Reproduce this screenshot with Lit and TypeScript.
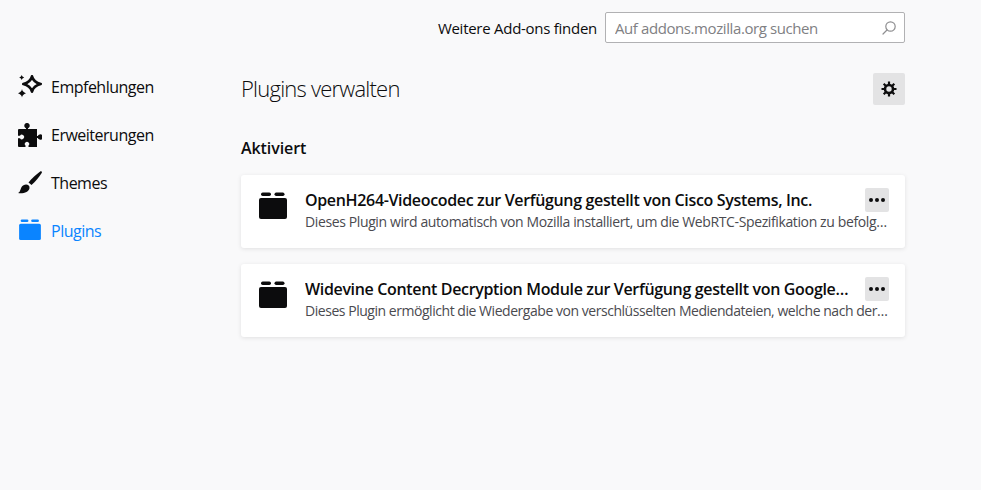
import { LitElement, html, css, svg } from "lit";
import { customElement } from "lit/decorators.js";

const pluginIcon = (cls: string) => html`<svg class=${cls} viewBox="0 0 28 27" fill="currentColor">
  <rect x="2" y="0.5" width="10" height="3.5" rx="1.7"></rect>
  <rect x="15.5" y="0.5" width="10" height="3.5" rx="1.7"></rect>
  <rect x="0" y="6" width="28" height="21" rx="2"></rect>
</svg>`;

const navIcons = {
  sparkle: svg`
    <path d="M14 1.3Q15.6 7.4 22.7 9Q15.6 10.6 14 16.7Q12.4 10.6 5.3 9Q12.4 7.4 14 1.3Z" fill="none" stroke="currentColor" stroke-width="2.6" stroke-linejoin="round"></path>
    <path d="M3.7 0Q4 1.9 6.2 2.5Q4 3.1 3.7 5Q3.4 3.1 1.2 2.5Q3.4 1.9 3.7 0Z" fill="currentColor"></path>
    <path d="M4 14Q4.4 17 8 18.3Q4.4 19.5 4 22.5Q3.6 19.5 0 18.3Q3.6 17 4 14Z" fill="currentColor"></path>`,
  puzzle: svg`
    <path d="M1 6H8V5.2A2.7 2.7 0 1 1 10 5.2V6H19V13H19.8A2.7 2.7 0 1 1 19.8 15H19V24H10.5V22.6A2.2 2.2 0 1 0 7.5 22.6V24H1A1 1 0 0 1 0 23V15.2H2A2.2 2.2 0 1 0 2 12.8H0V7A1 1 0 0 1 1 6Z" fill="currentColor"></path>`,
  brush: svg`
    <path d="M22.5 0.3C23.6 -0.1 24.3 1 23.7 2C21 6.5 17 11 13.5 14L10.5 11.5C13.5 8 18.5 3 22.5 0.3Z" fill="currentColor"></path>
    <path d="M0 22C3 21 2 16 5.5 14.2C8.5 12.7 12 14 11.5 17.2C11 21 5 23 0 22Z" fill="currentColor"></path>`,
};

@customElement("app-root")
export class AppRoot extends LitElement {
  static styles = css`
    :host {
      display: block;
      height: 490px;
      background: #f9f9fa;
      color: #0c0c0d;
      font-family: "Open Sans", "Noto Sans", sans-serif;
      font-size: 15px;
      overflow: hidden;
    }
    .page {
      display: flex;
      padding-right: 76px;
    }
    .sidebar {
      width: 241px;
      flex: none;
      padding-top: 63px;
    }
    .nav-item {
      display: flex;
      align-items: center;
      gap: 9px;
      height: 48px;
      padding-left: 18px;
      font-size: 16px;
      letter-spacing: -0.5px;
    }
    .nav-item.active {
      color: #0a84ff;
    }
    .nav-icon {
      width: 24px;
      height: 24px;
      flex: none;
    }
    .nav-plugin {
      width: 24px;
      height: 21px;
      flex: none;
      margin-bottom: 3px;
    }
    main {
      flex: 1;
      min-width: 0;
      padding-top: 12px;
    }
    .search-row {
      display: flex;
      justify-content: flex-end;
      align-items: center;
      gap: 8px;
      height: 31px;
      letter-spacing: -0.27px;
    }
    .search {
      display: flex;
      align-items: center;
      width: 300px;
      height: 31px;
      box-sizing: border-box;
      background: #fff;
      border: 1px solid #b1b1b3;
      border-radius: 2px;
      padding: 0 8px 0 9px;
    }
    .search input {
      flex: 1;
      min-width: 0;
      border: 0;
      padding: 0;
      outline: 0;
      background: none;
      font: inherit;
      letter-spacing: -0.41px;
    }
    .search input::placeholder {
      color: #808083;
      opacity: 1;
    }
    .search svg {
      width: 14px;
      height: 14px;
      flex: none;
      color: #8f8f91;
    }
    .title-row {
      display: flex;
      justify-content: space-between;
      align-items: center;
      margin-top: 30px;
    }
    h1 {
      margin: 0;
      padding-bottom: 2px;
      font-size: 22px;
      font-weight: 300;
      letter-spacing: -0.78px;
    }
    .icon-btn {
      display: flex;
      align-items: center;
      justify-content: center;
      border-radius: 2px;
      background: #e3e3e4;
      color: #0c0c0d;
    }
    .gear {
      width: 32px;
      height: 32px;
    }
    .gear svg {
      width: 16px;
      height: 16px;
    }
    h2 {
      margin: 32px 0 16px;
      font-size: 16px;
      line-height: 22px;
      font-weight: 600;
      letter-spacing: -0.07px;
    }
    .card {
      display: flex;
      height: 73px;
      box-sizing: border-box;
      margin-bottom: 16px;
      padding: 13px 16px 0 18px;
      background: #fff;
      border-radius: 3px;
      box-shadow: 0 1px 4px rgba(12, 12, 13, 0.1);
    }
    .card-icon {
      width: 28px;
      height: 27px;
      flex: none;
      margin: 4px 18px 0 0;
    }
    .card-body {
      flex: 1;
      min-width: 0;
    }
    .card-head {
      display: flex;
      align-items: center;
      justify-content: space-between;
      gap: 16px;
      height: 24px;
    }
    .name {
      min-width: 0;
      font-size: 16px;
      font-weight: 600;
      letter-spacing: -0.34px;
      white-space: nowrap;
      overflow: hidden;
      text-overflow: ellipsis;
    }
    .more {
      width: 24px;
      height: 24px;
      flex: none;
    }
    .more svg {
      width: 16px;
      height: 4px;
    }
    .desc {
      margin-top: 1px;
      font-size: 14px;
      line-height: 18px;
      color: #4a4a4f;
      letter-spacing: -0.38px;
      white-space: nowrap;
      overflow: hidden;
      text-overflow: ellipsis;
    }
    .desc.tight {
      letter-spacing: -0.46px;
    }
  `;

  private navItem(label: string, icon: unknown, active = false) {
    return html`<div class="nav-item ${active ? "active" : ""}">${icon}<span>${label}</span></div>`;
  }

  private card(name: string, desc: string, tight = false) {
    return html`<div class="card">
      ${pluginIcon("card-icon")}
      <div class="card-body">
        <div class="card-head">
          <div class="name">${name}</div>
          <div class="icon-btn more">
            <svg viewBox="0 0 16 4" fill="currentColor">
              <circle cx="2" cy="2" r="2"></circle>
              <circle cx="8" cy="2" r="2"></circle>
              <circle cx="14" cy="2" r="2"></circle>
            </svg>
          </div>
        </div>
        <div class="desc ${tight ? "tight" : ""}">${desc}</div>
      </div>
    </div>`;
  }

  render() {
    const icon = (body: unknown) => html`<svg class="nav-icon" viewBox="0 0 24 24">${body}</svg>`;
    return html`<div class="page">
      <nav class="sidebar">
        ${this.navItem("Empfehlungen", icon(navIcons.sparkle))}
        ${this.navItem("Erweiterungen", icon(navIcons.puzzle))}
        ${this.navItem("Themes", icon(navIcons.brush))}
        ${this.navItem("Plugins", pluginIcon("nav-plugin"), true)}
      </nav>
      <main>
        <div class="search-row">
          <span>Weitere Add-ons finden</span>
          <label class="search">
            <input placeholder="Auf addons.mozilla.org suchen" />
            <svg viewBox="0 0 14 14" fill="none" stroke="currentColor" stroke-width="1.2">
              <circle cx="8.5" cy="5.5" r="4.7"></circle>
              <path d="M5 9L1 13" stroke-linecap="round"></path>
            </svg>
          </label>
        </div>
        <div class="title-row">
          <h1>Plugins verwalten</h1>
          <div class="icon-btn gear">
            <svg viewBox="0 0 16 16" fill="none" stroke="currentColor">
              <circle cx="8" cy="8" r="4" stroke-width="2.6"></circle>
              <path d="M8 0.5V4M8 12V15.5M0.5 8H4M12 8H15.5M2.7 2.7L5.2 5.2M10.8 10.8L13.3 13.3M13.3 2.7L10.8 5.2M5.2 10.8L2.7 13.3" stroke-width="2.2"></path>
            </svg>
          </div>
        </div>
        <h2>Aktiviert</h2>
        ${this.card(
          "OpenH264-Videocodec zur Verfügung gestellt von Cisco Systems, Inc.",
          "Dieses Plugin wird automatisch von Mozilla installiert, um die WebRTC-Spezifikation zu befolgen und Anrufe zu ermöglichen."
        )}
        ${this.card(
          "Widevine Content Decryption Module zur Verfügung gestellt von Google Inc.",
          "Dieses Plugin ermöglicht die Wiedergabe von verschlüsselten Mediendateien, welche nach der Encrypted-Media-Extensions-Spezifikation arbeiten.",
          true
        )}
      </main>
    </div>`;
  }
}
